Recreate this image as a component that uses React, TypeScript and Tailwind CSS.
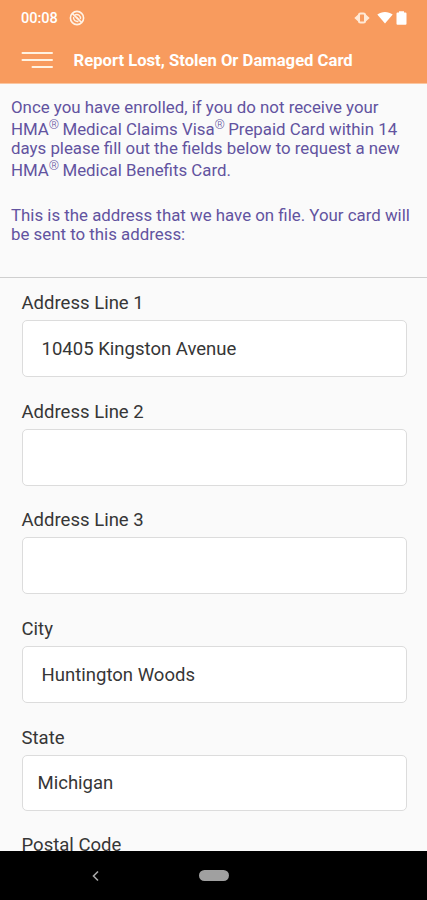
import React from "react";

function Reg() {
  return <span className="relative -top-[6px] -mr-px text-[13px] font-light leading-none">®</span>;
}

function StatusBar() {
  return (
    <div className="flex h-9 items-center pl-[21px] pr-[20px] text-white">
      <span className="mt-px text-[14.5px] font-medium leading-5">00:08</span>
      <svg className="ml-[11px]" width="16" height="16" viewBox="0 0 16 16" fill="none" stroke="#fff3e6" strokeWidth="1.600">
        <circle cx="8" cy="8" r="6.600" />
        <path d="M3.500 3.700 12.500 12.300" />
        <path d="M6 4.800c3-1.200 6.200 1 5.400 4.400M4.600 7c-.6 3 2 5 4.800 4.300M7.300 7.200l2 1.900" strokeWidth="1.400" />
      </svg>
      <svg className="ml-auto" width="16" height="14" viewBox="0 0 16 14">
        <path d="M0.300 7 5 2.700V11.300ZM15.700 7 11 2.700V11.300Z" fill="#ffe9d6" />
        <rect x="5" y="2.400" width="6" height="9.200" rx="1.500" fill="none" stroke="#ffe9d6" strokeWidth="2" />
      </svg>
      <svg className="ml-[7px]" width="16" height="14" viewBox="0 0 16 14" fill="white">
        <path d="M0.300 3.600C4.800.2 11.200.2 15.700 3.600L8 12.600Z" />
      </svg>
      <svg className="ml-[3px]" width="11" height="14" viewBox="0 0 11 14" fill="white">
        <path d="M1.500 1.500H3V.3H8V1.500H9.500Q10.500 1.500 10.500 2.500V12.700Q10.500 13.700 9.500 13.700H1.500Q.5 13.700 .5 12.700V2.500Q.5 1.500 1.500 1.500Z" />
      </svg>
    </div>
  );
}

function Header() {
  return (
    <header className="h-[84px] shrink-0 border-b border-[#fbc6a0] bg-[#f89b5e]">
      <StatusBar />
      <div className="flex h-[47px] items-center pl-[21px]">
        <svg width="32" height="18" viewBox="0 0 32 18" stroke="#fff3e2" strokeWidth="2" strokeLinecap="round">
          <path d="M1.500 2H31M1.500 9H31M11.500 16H31" />
        </svg>
        <h1 className="ml-[20.5px] mt-[2px] whitespace-nowrap text-[16.65px] font-bold leading-5 text-white">
          Report Lost, Stolen Or Damaged Card
        </h1>
      </div>
    </header>
  );
}

function Intro() {
  return (
    <section className="h-[194px] shrink-0 whitespace-nowrap border-b border-[#cfcfcf] pl-[11px] pt-[13px] text-[16.85px] leading-5 text-[#6253a0]">
      <p>
        <span className="block h-[22px]">Once you have enrolled, if you do not receive your</span>
        <span className="block h-[19px]">HMA<Reg /> Medical Claims Visa<Reg /> Prepaid Card within 14</span>
        <span className="block h-[22px]">days please fill out the fields below to request a new</span>
        <span className="block h-[20px]">HMA<Reg /> Medical Benefits Card.</span>
      </p>
      <p className="mt-[25px]">
        <span className="block h-[19px]">This is the address that we have on file. Your card will</span>
        <span className="block">be sent to this address:</span>
      </p>
    </section>
  );
}

const fields = [
  { label: "Address Line 1", value: "10405 Kingston Avenue" },
  { label: "Address Line 2", value: "" },
  { label: "Address Line 3", value: "" },
  { label: "City", value: "Huntington Woods" },
  { label: "State", value: "Michigan", select: true },
];

export default function App() {
  return (
    <div className="flex h-[900px] w-[427px] flex-col overflow-hidden bg-[#fafafa] font-['Roboto',sans-serif]">
      <Header />
      <Intro />
      <form className="flex min-h-0 flex-1 flex-col overflow-hidden pl-[21.5px] pr-[20px] pt-[14px] text-[18.55px] text-[#363636]">
        {fields.map((f) => (
          <div key={f.label} className="h-[108.7px] shrink-0">
            <label className="block h-[28px] leading-[22px]">{f.label}</label>
            <div
              className={
                f.select
                  ? "flex h-[56px] items-center rounded-[5px] border border-[#dcdcdc] bg-white pl-[15px] pt-[3px]"
                  : "flex h-[57px] items-center rounded-[5px] border border-[#dcdcdc] bg-white pl-[19px] pt-[2px]"
              }
            >
              {f.value}
            </div>
          </div>
        ))}
        <label className="block shrink-0 leading-5">Postal Code</label>
      </form>
      <nav className="flex h-[49px] shrink-0 items-center bg-black">
        <svg className="ml-[91px]" width="9" height="12" viewBox="0 0 9 12" fill="none" stroke="#a8a8a8" strokeWidth="1.600">
          <path d="M7 1.500 2.500 6l4.500 4.500" />
        </svg>
        <div className="ml-[99px] h-[11px] w-[30px] rounded-full bg-[#a0a0a0]" />
      </nav>
    </div>
  );
}
